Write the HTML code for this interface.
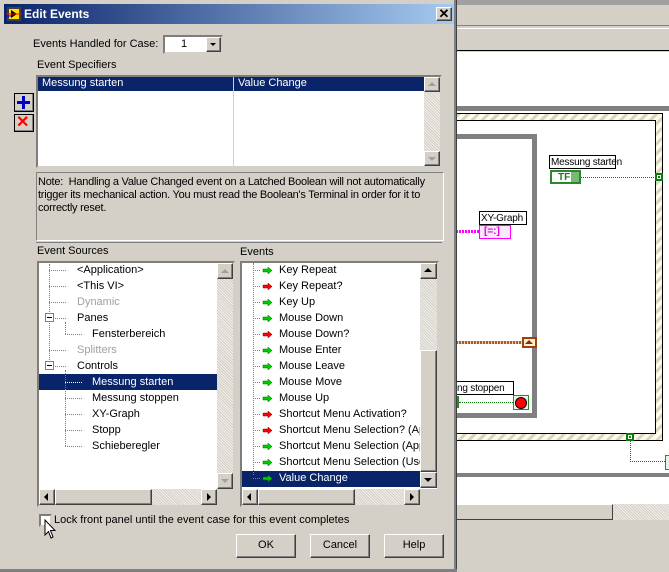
<!DOCTYPE html>
<html><head><meta charset="utf-8"><style>
*{box-sizing:border-box;margin:0;padding:0}
body{width:669px;height:572px;position:relative;overflow:hidden;background:#d4d0c8;font-family:"Liberation Sans",sans-serif;font-size:11px;color:#000}
.a{position:absolute}
.t{position:absolute;white-space:nowrap;line-height:13px}
.sunk2{border:2px inset #d4d0c8}
.raised{background:#d4d0c8;border-top:1px solid #fff;border-left:1px solid #fff;border-right:1px solid #404040;border-bottom:1px solid #404040;box-shadow:inset -1px -1px 0 #808080}
.track{background-color:#e8e6e2;background-image:repeating-linear-gradient(45deg,#d4d0c8 0 1px,#f0eeea 1px 2px)}
.sel{background:#0a246a;color:#fff}
.gray{color:#a0a0a0}
.dots{position:absolute;border-top:1px dotted #808080}
.vdots{position:absolute;border-left:1px dotted #808080}
.btn{position:absolute;background:#d4d0c8;border-top:1px solid #fff;border-left:1px solid #fff;border-right:1px solid #404040;border-bottom:1px solid #404040;box-shadow:inset -1px -1px 0 #808080;text-align:center;line-height:21px;font-size:11px}
.lbl{font-size:10px;letter-spacing:-0.2px}
</style></head><body>
<div class="a" style="left:456px;top:0;width:213px;height:5px;background:#a0a0a0"></div>
<div class="a" style="left:456px;top:6px;width:213px;height:20px;background:#d4d0c8;border-bottom:1px solid #808080"></div>
<div class="a" style="left:456px;top:28px;width:213px;height:1px;background:#fff"></div>
<div class="a" style="left:456px;top:29px;width:213px;height:22px;background:#d4d0c8;border-bottom:1px solid #000"></div>
<div class="a" style="left:456px;top:52px;width:213px;height:452px;background:#fff"></div>
<div class="a" style="left:456px;top:106px;width:213px;height:5px;background:#808080"></div>
<div class="a" style="left:420px;top:113px;width:243px;height:328px;border:1px solid #000;background:repeating-linear-gradient(135deg,#fffbe8 0 4px,#d8d4c0 4px 7px)"></div>
<div class="a" style="left:420px;top:120px;width:236px;height:314px;border:1px solid #000;background:#fff"></div>
<div class="a" style="left:440px;top:134px;width:97px;height:5px;background:#808080"></div>
<div class="a" style="left:532px;top:134px;width:5px;height:284px;background:#808080"></div>
<div class="a" style="left:440px;top:413px;width:92px;height:5px;background:#808080"></div>
<div class="t lbl" style="left:549px;top:155px;width:67px;height:14px;border:1px solid #000;background:#fff;padding-left:1px">Messung starten</div>
<div class="a" style="left:550px;top:170px;width:31px;height:14px;border:2px solid #2a8a2a;background:#fff"></div>
<div class="t" style="left:558px;top:171px;font-weight:bold;color:#1a7a1a;font-size:10px">TF</div>
<div class="a" style="left:571px;top:172px;width:8px;height:10px;background:#7ab87a"></div>
<div class="a" style="left:581px;top:177px;width:75px;border-top:1px dotted #0a7a0a"></div>
<div class="a" style="left:655px;top:173px;width:8px;height:8px;background:#0a7a0a;box-shadow:inset 0 0 0 2px #0a7a0a,inset 0 0 0 3px #fff"></div>
<div class="t lbl" style="left:479px;top:211px;width:48px;height:14px;border:1px solid #000;background:#fff;padding-left:1px">XY-Graph</div>
<div class="a" style="left:479px;top:225px;width:32px;height:14px;border:1px solid #f0f;background:#fce8fc"></div>
<div class="t" style="left:484px;top:225px;color:#e000e0;font-size:10px;font-weight:bold">[=:]</div>
<div class="a" style="left:456px;top:230px;width:23px;height:3px;background:repeating-linear-gradient(90deg,#f0f 0 2px,#fff 2px 3px)"></div>
<div class="a" style="left:456px;top:341px;width:66px;height:3px;background:repeating-linear-gradient(90deg,#b05a2a 0 2px,#f0d0b0 2px 3px)"></div>
<div class="a" style="left:522px;top:337px;width:15px;height:11px;border:2px solid #a04010;background:#fff0d0"></div>
<div class="a" style="left:525px;top:340px;width:0;height:0;border-left:4px solid transparent;border-right:4px solid transparent;border-bottom:4px solid #803010"></div>
<div class="t lbl" style="left:456px;top:381px;width:58px;height:14px;border:1px solid #000;border-left:none;background:#fff;padding-left:1px">ng stoppen</div>
<div class="a" style="left:456px;top:396px;width:3px;height:12px;background:#2a8a2a"></div>
<div class="a" style="left:459px;top:402px;width:54px;border-top:1px dotted #0a7a0a"></div>
<div class="a" style="left:513px;top:395px;width:16px;height:15px;border:1px solid #2a8a2a;background:#e8f4e8"></div>
<div class="a" style="left:516px;top:398px;width:10px;height:10px;border-radius:50%;background:#f00;box-shadow:0 0 0 1px #000"></div>
<div class="a" style="left:626px;top:433px;width:8px;height:8px;background:#0a7a0a;box-shadow:inset 0 0 0 2px #0a7a0a,inset 0 0 0 3px #fff"></div>
<div class="a" style="left:630px;top:441px;height:21px;border-left:1px dotted #0a7a0a"></div>
<div class="a" style="left:630px;top:461px;width:35px;border-top:1px dotted #0a7a0a"></div>
<div class="a" style="left:665px;top:455px;width:8px;height:15px;border:1px solid #2a8a2a;background:#e8f4e8"></div>
<div class="a" style="left:456px;top:473px;width:213px;height:4px;background:#808080"></div>
<div class="a" style="left:456px;top:504px;width:157px;height:16px;background:#d4d0c8;border-top:1px solid #fff;border-right:1px solid #404040;border-bottom:1px solid #404040"></div>
<div class="a track" style="left:613px;top:504px;width:56px;height:16px"></div>
<div class="a" style="left:456px;top:520px;width:213px;height:52px;background:#d4d0c8"></div>

<div class="a" style="left:0;top:0;width:457px;height:572px;background:#d4d0c8;border-right:1px solid #404040;box-shadow:inset -2px 0 0 #808080"></div>
<div class="a" style="left:0;top:569px;width:457px;height:3px;background:#808080"></div>
<div class="a" style="left:4px;top:4px;width:450px;height:20px;background:linear-gradient(90deg,#0a246a,#a6caf0)"></div>
<svg class="a" style="left:6px;top:6px" width="16" height="16"><rect x="1" y="1" width="14" height="14" fill="#404040"/><rect x="3" y="3" width="10" height="10" fill="#ffe000"/><path d="M5 4 L11 8 L5 12 Z" fill="#000"/><line x1="0" y1="8" x2="16" y2="8" stroke="#f00" stroke-width="1"/><line x1="0" y1="10" x2="5" y2="10" stroke="#00f"/></svg>
<div class="t" style="left:24px;top:8px;color:#fff;font-weight:bold;font-size:12px">Edit Events</div>
<div class="a raised" style="left:436px;top:7px;width:16px;height:14px;text-align:center;line-height:11px;font-size:13px;font-weight:bold">✕</div>

<div class="t" style="left:33px;top:38px">Events Handled for Case:</div>
<div class="a sunk2" style="left:163px;top:35px;width:60px;height:19px;background:#fff"></div>
<div class="t" style="left:181px;top:38px">1</div>
<div class="a raised" style="left:206px;top:37px;width:15px;height:15px"></div>
<div class="a" style="left:210px;top:43px;border-left:3px solid transparent;border-right:3px solid transparent;border-top:3px solid #000"></div>

<div class="t" style="left:37px;top:59px">Event Specifiers</div>
<div class="a sunk2" style="left:36px;top:75px;width:406px;height:93px;background:#fff"></div>
<div class="a sel" style="left:38px;top:77px;width:386px;height:14px"></div>
<div class="t" style="left:42px;top:77px;color:#fff">Messung starten</div>
<div class="t" style="left:238px;top:77px;color:#fff">Value Change</div>
<div class="a" style="left:233px;top:77px;width:1px;height:89px;background:#d4d0c8"></div>
<div class="a track" style="left:424px;top:77px;width:16px;height:89px"></div>
<div class="a raised" style="left:424px;top:77px;width:16px;height:15px"></div>
<div class="a" style="left:428px;top:82px;border-left:4px solid transparent;border-right:4px solid transparent;border-bottom:4px solid #a0a0a0"></div>
<div class="a raised" style="left:424px;top:151px;width:16px;height:15px"></div>
<div class="a" style="left:428px;top:157px;border-left:4px solid transparent;border-right:4px solid transparent;border-top:4px solid #a0a0a0"></div>

<div class="a raised" style="left:14px;top:93px;width:20px;height:19px;border:1px solid #000"></div>
<div class="a" style="left:17px;top:101px;width:13px;height:3px;background:#0000c0"></div>
<div class="a" style="left:22px;top:96px;width:3px;height:13px;background:#0000c0"></div>
<div class="a raised" style="left:14px;top:114px;width:20px;height:18px;border:1px solid #000"></div>
<div class="t" style="left:16px;top:114px;color:#f00;font-size:16px;font-weight:bold;line-height:17px">✕</div>

<div class="a" style="left:36px;top:172px;width:408px;height:69px;border:1px solid #808080;border-right-color:#fff;border-bottom-color:#fff"></div>
<div class="t" style="left:38px;top:176px;letter-spacing:-0.25px">Note:&nbsp; Handling a Value Changed event on a Latched Boolean will not automatically</div>
<div class="t" style="left:38px;top:189px;letter-spacing:-0.25px">trigger its mechanical action. You must read the Boolean's Terminal in order for it to</div>
<div class="t" style="left:38px;top:202px;letter-spacing:-0.25px">correctly reset.</div>

<div class="a" style="left:36px;top:242px;width:406px;height:25px;border-top:1px solid #808080"></div>
<div class="t" style="left:37px;top:245px">Event Sources</div>
<div class="t" style="left:240px;top:246px">Events</div>

<div class="a sunk2" style="left:37px;top:261px;width:198px;height:246px;background:#fff"></div>
<div class="a track" style="left:217px;top:263px;width:16px;height:226px"></div>
<div class="a raised" style="left:217px;top:263px;width:16px;height:16px"></div>
<div class="a" style="left:221px;top:269px;border-left:4px solid transparent;border-right:4px solid transparent;border-bottom:4px solid #a0a0a0"></div>
<div class="a raised" style="left:217px;top:473px;width:16px;height:16px"></div>
<div class="a" style="left:221px;top:479px;border-left:4px solid transparent;border-right:4px solid transparent;border-top:4px solid #a0a0a0"></div>
<div class="a track" style="left:39px;top:489px;width:194px;height:16px"></div>
<div class="a raised" style="left:39px;top:489px;width:16px;height:16px"></div>
<div class="a" style="left:44px;top:493px;border-top:4px solid transparent;border-bottom:4px solid transparent;border-right:4px solid #000"></div>
<div class="a raised" style="left:55px;top:489px;width:97px;height:16px"></div>
<div class="a raised" style="left:201px;top:489px;width:16px;height:16px"></div>
<div class="a" style="left:207px;top:493px;border-top:4px solid transparent;border-bottom:4px solid transparent;border-left:4px solid #000"></div>
<div class="a" style="left:217px;top:489px;width:16px;height:16px;background:#d4d0c8"></div>

<div class="a sel" style="left:39px;top:374px;width:178px;height:16px"></div>
<div class="vdots" style="left:49px;top:264px;height:98px"></div>
<div class="dots" style="left:49px;top:270px;width:17px"></div>
<div class="dots" style="left:49px;top:286px;width:17px"></div>
<div class="dots" style="left:49px;top:302px;width:17px"></div>
<div class="dots" style="left:49px;top:318px;width:17px"></div>
<div class="dots" style="left:49px;top:350px;width:17px"></div>
<div class="dots" style="left:49px;top:366px;width:17px"></div>
<div class="vdots" style="left:65px;top:322px;height:12px"></div>
<div class="dots" style="left:65px;top:334px;width:17px"></div>
<div class="vdots" style="left:65px;top:370px;height:76px"></div>
<div class="dots" style="left:65px;top:382px;width:17px;border-color:#fff"></div>
<div class="dots" style="left:65px;top:398px;width:17px"></div>
<div class="dots" style="left:65px;top:414px;width:17px"></div>
<div class="dots" style="left:65px;top:430px;width:17px"></div>
<div class="dots" style="left:65px;top:446px;width:17px"></div>
<div class="a" style="left:45px;top:313px;width:9px;height:9px;border:1px solid #808080;background:#fff"></div>
<div class="a" style="left:47px;top:317px;width:5px;height:1px;background:#000"></div>
<div class="a" style="left:45px;top:361px;width:9px;height:9px;border:1px solid #808080;background:#fff"></div>
<div class="a" style="left:47px;top:365px;width:5px;height:1px;background:#000"></div>
<div class="t" style="left:77px;top:264px">&lt;Application&gt;</div>
<div class="t" style="left:77px;top:280px">&lt;This VI&gt;</div>
<div class="t gray" style="left:77px;top:296px">Dynamic</div>
<div class="t" style="left:77px;top:312px">Panes</div>
<div class="t" style="left:92px;top:328px">Fensterbereich</div>
<div class="t gray" style="left:77px;top:344px">Splitters</div>
<div class="t" style="left:77px;top:360px">Controls</div>
<div class="t" style="left:92px;top:376px;color:#fff">Messung starten</div>
<div class="t" style="left:92px;top:392px">Messung stoppen</div>
<div class="t" style="left:92px;top:408px">XY-Graph</div>
<div class="t" style="left:92px;top:424px">Stopp</div>
<div class="t" style="left:92px;top:440px">Schieberegler</div>

<div class="a sunk2" style="left:240px;top:261px;width:199px;height:246px;background:#fff"></div>
<div class="a sel" style="left:242px;top:471px;width:178px;height:16px"></div>
<div class="vdots" style="left:253px;top:263px;height:212px"></div>
<div class="a track" style="left:420px;top:263px;width:17px;height:225px"></div>
<div class="a raised" style="left:420px;top:263px;width:17px;height:16px"></div>
<div class="a" style="left:424px;top:268px;border-left:4px solid transparent;border-right:4px solid transparent;border-bottom:4px solid #000"></div>
<div class="a raised" style="left:420px;top:350px;width:17px;height:122px"></div>
<div class="a raised" style="left:420px;top:472px;width:17px;height:16px"></div>
<div class="a" style="left:424px;top:478px;border-left:4px solid transparent;border-right:4px solid transparent;border-top:4px solid #000"></div>
<div class="a track" style="left:242px;top:489px;width:195px;height:16px"></div>
<div class="a raised" style="left:242px;top:489px;width:16px;height:16px"></div>
<div class="a" style="left:247px;top:493px;border-top:4px solid transparent;border-bottom:4px solid transparent;border-right:4px solid #000"></div>
<div class="a raised" style="left:258px;top:489px;width:97px;height:16px"></div>
<div class="a raised" style="left:404px;top:489px;width:16px;height:16px"></div>
<div class="a" style="left:410px;top:493px;border-top:4px solid transparent;border-bottom:4px solid transparent;border-left:4px solid #000"></div>
<div class="a" style="left:420px;top:489px;width:17px;height:16px;background:#d4d0c8"></div>

<svg class="a" style="left:253px;top:262px" width="30" height="228">
<g stroke="#808080" stroke-dasharray="1 1">
<line x1="0" y1="8.5" x2="7" y2="8.5"/><line x1="0" y1="24.5" x2="7" y2="24.5"/><line x1="0" y1="40.5" x2="7" y2="40.5"/><line x1="0" y1="56.5" x2="7" y2="56.5"/><line x1="0" y1="72.5" x2="7" y2="72.5"/><line x1="0" y1="88.5" x2="7" y2="88.5"/><line x1="0" y1="104.5" x2="7" y2="104.5"/><line x1="0" y1="120.5" x2="7" y2="120.5"/><line x1="0" y1="136.5" x2="7" y2="136.5"/><line x1="0" y1="152.5" x2="7" y2="152.5"/><line x1="0" y1="168.5" x2="7" y2="168.5"/><line x1="0" y1="184.5" x2="7" y2="184.5"/><line x1="0" y1="200.5" x2="7" y2="200.5"/><line x1="0" y1="216.5" x2="7" y2="216.5"/>
</g>
<g stroke-width=".5">
<path d="M10 7h5v-2l4 3.5-4 3.5v-2h-5z" fill="#0c0" stroke="#060"/>
<path d="M10 7h5v-2l4 3.5-4 3.5v-2h-5z" fill="#f00" stroke="#800" transform="translate(0,16)"/>
<path d="M10 7h5v-2l4 3.5-4 3.5v-2h-5z" fill="#0c0" stroke="#060" transform="translate(0,32)"/>
<path d="M10 7h5v-2l4 3.5-4 3.5v-2h-5z" fill="#0c0" stroke="#060" transform="translate(0,48)"/>
<path d="M10 7h5v-2l4 3.5-4 3.5v-2h-5z" fill="#f00" stroke="#800" transform="translate(0,64)"/>
<path d="M10 7h5v-2l4 3.5-4 3.5v-2h-5z" fill="#0c0" stroke="#060" transform="translate(0,80)"/>
<path d="M10 7h5v-2l4 3.5-4 3.5v-2h-5z" fill="#0c0" stroke="#060" transform="translate(0,96)"/>
<path d="M10 7h5v-2l4 3.5-4 3.5v-2h-5z" fill="#0c0" stroke="#060" transform="translate(0,112)"/>
<path d="M10 7h5v-2l4 3.5-4 3.5v-2h-5z" fill="#0c0" stroke="#060" transform="translate(0,128)"/>
<path d="M10 7h5v-2l4 3.5-4 3.5v-2h-5z" fill="#f00" stroke="#800" transform="translate(0,144)"/>
<path d="M10 7h5v-2l4 3.5-4 3.5v-2h-5z" fill="#f00" stroke="#800" transform="translate(0,160)"/>
<path d="M10 7h5v-2l4 3.5-4 3.5v-2h-5z" fill="#0c0" stroke="#060" transform="translate(0,176)"/>
<path d="M10 7h5v-2l4 3.5-4 3.5v-2h-5z" fill="#0c0" stroke="#060" transform="translate(0,192)"/>
<path d="M10 7h5v-2l4 3.5-4 3.5v-2h-5z" fill="#0c0" stroke="#060" transform="translate(0,208)"/>
</g></svg>
<div class="a" style="left:279px;top:264px;width:141px;height:224px;overflow:hidden">
<div class="t" style="left:0;top:0">Key Repeat</div>
<div class="t" style="left:0;top:16px">Key Repeat?</div>
<div class="t" style="left:0;top:32px">Key Up</div>
<div class="t" style="left:0;top:48px">Mouse Down</div>
<div class="t" style="left:0;top:64px">Mouse Down?</div>
<div class="t" style="left:0;top:80px">Mouse Enter</div>
<div class="t" style="left:0;top:96px">Mouse Leave</div>
<div class="t" style="left:0;top:112px">Mouse Move</div>
<div class="t" style="left:0;top:128px">Mouse Up</div>
<div class="t" style="left:0;top:144px">Shortcut Menu Activation?</div>
<div class="t" style="left:0;top:160px">Shortcut Menu Selection? (App)</div>
<div class="t" style="left:0;top:176px">Shortcut Menu Selection (App)</div>
<div class="t" style="left:0;top:192px">Shortcut Menu Selection (User)</div>
<div class="t" style="left:0;top:208px;color:#fff">Value Change</div>
</div>

<div class="a" style="left:39px;top:514px;width:13px;height:13px;border:2px inset #d4d0c8;background:#fff"></div>
<svg class="a" style="left:44px;top:519px" width="14" height="22"><path d="M1 1 L1 16 L4.5 12.5 L7 19 L9 18 L6.5 11.5 L11 11.5 Z" fill="#fff" stroke="#000" stroke-width="1"/></svg>
<div class="t" style="left:54px;top:514px">Lock front panel until the event case for this event completes</div>
<div class="btn" style="left:236px;top:534px;width:60px;height:24px">OK</div>
<div class="btn" style="left:310px;top:534px;width:60px;height:24px">Cancel</div>
<div class="btn" style="left:384px;top:534px;width:60px;height:24px">Help</div>
</body></html>
